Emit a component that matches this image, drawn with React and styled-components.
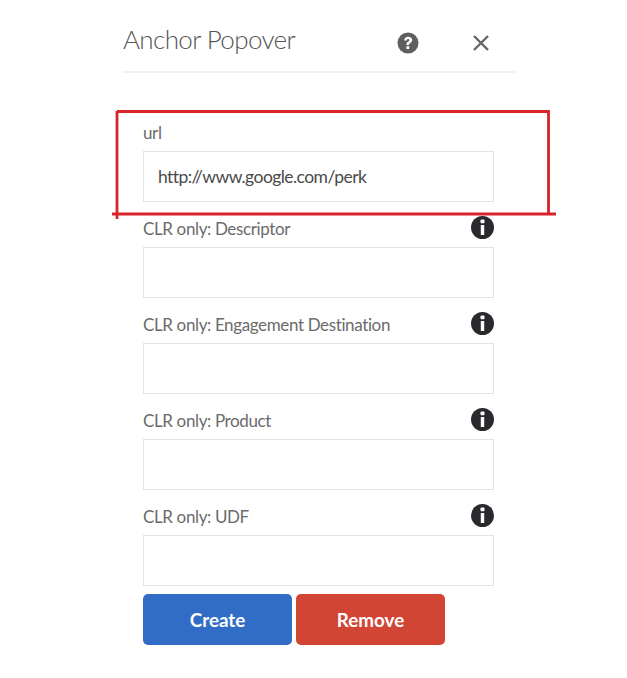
import React from "react";
import styled, { createGlobalStyle } from "styled-components";

const Global = createGlobalStyle`
  html, body { margin: 0; padding: 0; background: #fff; }
  body { font-family: "Lato", "Noto Sans", sans-serif; }
`;

const Page = styled.div`
  position: relative;
  width: 627px;
  height: 678px;
  overflow: hidden;
  background: #fff;
`;

const Panel = styled.div`
  width: 392px;
  margin-left: 123px;
`;

const Header = styled.header`
  display: flex;
  align-items: center;
  height: 71px;
  padding-top: 15px;
  box-sizing: border-box;
  box-shadow: 0 2px 0 #f1f1f1;
`;

const Title = styled.h1`
  flex: 1;
  margin: 0 0 9px;
  font-family: "Lato", sans-serif;
  font-size: 26px;
  font-weight: 300;
  letter-spacing: -0.62px;
  color: #555;
`;

const HeaderIcons = styled.div`
  display: flex;
  align-items: center;
  gap: 54px;
  margin-right: 26px;
  margin-bottom: 1px;
`;

const IconButton = styled.button`
  display: flex;
  padding: 0;
  border: 0;
  background: none;
`;

const Form = styled.form`
  display: flex;
  flex-direction: column;
  margin: 35px 0 0 20px;
  width: 351px;
`;

const Field = styled.div`
  display: flex;
  flex-direction: column;
`;

const LabelRow = styled.div`
  display: flex;
  align-items: center;
  justify-content: space-between;
  height: 45px;
  box-sizing: border-box;
  padding-top: ${p => (p.$first ? "7px" : "8px")};
`;

const Label = styled.label`
  font-size: 17px;
  letter-spacing: -0.37px;
  color: #6b6b6b;
`;

const InfoSlot = styled.span`
  display: flex;
  margin-bottom: 2px;
`;

const TextInput = styled.input`
  box-sizing: border-box;
  width: 351px;
  height: 51px;
  padding: 0 14px;
  border: 1.5px solid #e2e2e2;
  background: #fff;
  outline: none;
  font-family: "Lato", sans-serif;
  font-size: 17.5px;
  letter-spacing: -0.56px;
  color: #4a4a4a;
`;

const Buttons = styled.div`
  display: flex;
  gap: 4px;
  margin-top: 8px;
`;

const ActionButton = styled.button`
  width: 149px;
  height: 51px;
  border: 0;
  border-radius: 5px;
  background: ${p => p.$bg};
  color: #fff;
  font-family: "Lato", sans-serif;
  font-size: 18.8px;
  font-weight: 700;
`;

const Annotation = styled.svg`
  position: absolute;
  left: 0;
  top: 0;
  pointer-events: none;
`;

const QuestionIcon = () => (
  <svg width="22" height="22" viewBox="0 0 22 22">
    <circle cx="11" cy="11" r="10.5" fill="#5f5f5f" />
    <path d="M7.2 8.4c.1-2.3 1.8-3.6 4-3.6 2.3 0 4 1.3 4 3.3 0 1.5-.9 2.3-1.9 3-.8.6-1.2 1-1.2 1.9H9.4c0-1.8.7-2.5 1.6-3.2.7-.5 1.3-.9 1.3-1.6 0-.7-.5-1.2-1.2-1.2-.9 0-1.3.6-1.4 1.4z" fill="#fff" />
    <rect x="9.4" y="14.2" width="2.8" height="2.8" fill="#fff" />
  </svg>
);

const CloseIcon = () => (
  <svg width="16" height="16" viewBox="0 0 16 16">
    <path d="M1 1l14 14M15 1L1 15" stroke="#656565" strokeWidth="2.4" fill="none" />
  </svg>
);

const InfoIcon = () => (
  <svg width="23" height="23" viewBox="0 0 23 23">
    <circle cx="11.5" cy="11.5" r="11.5" fill="#2a2a2e" />
    <rect x="9.5" y="3.6" width="4" height="3.6" rx="1" fill="#fff" />
    <rect x="9.8" y="9" width="3.4" height="10" fill="#fff" />
  </svg>
);

const fields = [
  { label: "url", value: "http://www.google.com/perk", first: true },
  { label: "CLR only: Descriptor", info: true },
  { label: "CLR only: Engagement Destination", info: true },
  { label: "CLR only: Product", info: true },
  { label: "CLR only: UDF", info: true },
];

export default function App() {
  return (
    <Page>
      <Global />
      <Panel>
        <Header>
          <Title>Anchor Popover</Title>
          <HeaderIcons>
            <IconButton type="button" aria-label="Help"><QuestionIcon /></IconButton>
            <IconButton type="button" aria-label="Close"><CloseIcon /></IconButton>
          </HeaderIcons>
        </Header>
        <Form>
          {fields.map(f => (
            <Field key={f.label}>
              <LabelRow $first={f.first}>
                <Label>{f.label}</Label>
                {f.info && <InfoSlot><InfoIcon /></InfoSlot>}
              </LabelRow>
              <TextInput readOnly value={f.value || ""} />
            </Field>
          ))}
          <Buttons>
            <ActionButton type="button" $bg="#316dc6">Create</ActionButton>
            <ActionButton type="button" $bg="#d24535">Remove</ActionButton>
          </Buttons>
        </Form>
      </Panel>
      <Annotation width="627" height="678" viewBox="0 0 627 678">
        <path d="M117 111.5H548.5V214M112 214H556M117 111V219" stroke="#d8232a" strokeWidth="2.8" fill="none" />
      </Annotation>
    </Page>
  );
}
